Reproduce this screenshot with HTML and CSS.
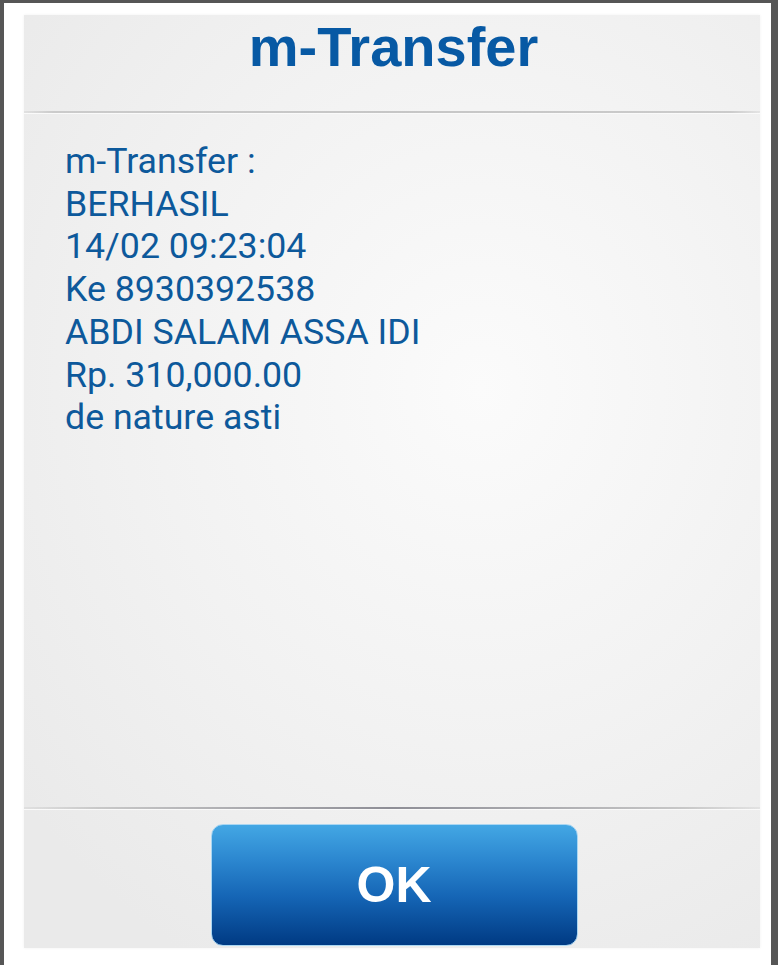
FILE: index.html
```html
<!DOCTYPE html>
<html lang="id">
<head>
<meta charset="utf-8">
<title>m-Transfer</title>
<link rel="stylesheet" href="styles.css">
</head>
<body>
<div class="dialog">
  <div class="panel">
    <div class="header">
      <h1 class="title">m-Transfer</h1>
    </div>
    <div class="divider"></div>
    <div class="message">
      <div>m-Transfer :</div>
      <div>BERHASIL</div>
      <div>14/02 09:23:04</div>
      <div>Ke 8930392538</div>
      <div>ABDI SALAM ASSA IDI</div>
      <div>Rp. 310,000.00</div>
      <div>de nature asti</div>
    </div>
    <div class="divider divider-bottom"></div>
    <div class="footer">
      <button class="ok-btn" type="button">OK</button>
    </div>
  </div>
</div>
</body>
</html>
```
FILE: styles.css
```css
html, body {
  margin: 0;
  padding: 0;
}
body {
  background: #565656;
  width: 778px;
  height: 965px;
  overflow: hidden;
}
.dialog {
  margin: 3px 7px 0 4px;
  height: 962px;
  background: #ffffff;
  padding: 12px 11px 0 20px;
  box-sizing: border-box;
}
.panel {
  height: 933px;
  display: flex;
  flex-direction: column;
  background: radial-gradient(ellipse 80% 70% at 62% 40%, #fbfbfb 0%, #f2f2f2 55%, #eaeaea 100%);
  box-shadow: 0 0 3px rgba(0,0,0,0.06);
}
.header {
  height: 96px;
  display: flex;
  align-items: flex-start;
  justify-content: center;
  padding-top: 4px;
  box-sizing: border-box;
}
.title {
  margin: 0 0 0 3px;
  font-family: "Liberation Sans", Arial, sans-serif;
  font-weight: bold;
  font-size: 56px;
  line-height: 1;
  color: #0759a4;
}
.divider {
  height: 2px;
  background: linear-gradient(to right, rgba(200,200,200,0.3) 0%, #cbcbcb 4%, #c6c6c6 50%, #cbcbcb 96%, rgba(200,200,200,0.3) 100%);
  border-bottom: 1px solid #fafafa;
}
.divider-bottom {
  background: linear-gradient(to right, rgba(200,200,200,0.3) 0%, #c8c8c8 10%, #8e8e96 50%, #c8c8c8 90%, rgba(200,200,200,0.3) 100%);
}
.message {
  flex: 1;
  padding: 26px 0 0 41px;
  font-family: Roboto, "Liberation Sans", sans-serif;
  font-size: 35.7px;
  line-height: 42.7px;
  color: #0d599b;
}
.footer {
  height: 138px;
  display: flex;
  justify-content: center;
  padding-top: 14px;
  box-sizing: border-box;
}
.ok-btn {
  width: 367px;
  height: 122px;
  margin-left: 4px;
  border: 1px solid #a9d6f2;
  border-radius: 12px;
  background: linear-gradient(to bottom, #43a7e4 0%, #2b86cf 30%, #1565b5 60%, #003a83 100%);
  color: #ffffff;
  font-family: "Liberation Sans", Arial, sans-serif;
  font-weight: bold;
  font-size: 50px;
  padding: 0;
  cursor: pointer;
}
```
